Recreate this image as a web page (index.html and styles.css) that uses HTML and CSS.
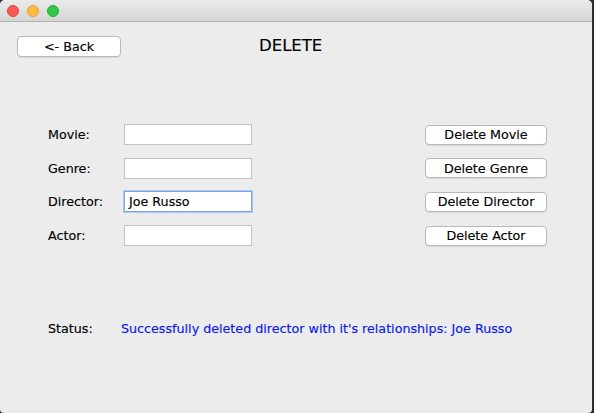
FILE: index.html
```html
<!DOCTYPE html>
<html>
<head>
<meta charset="utf-8">
<link rel="stylesheet" href="styles.css">
</head>
<body>
<div class="window">
  <div class="titlebar">
    <span class="light red"></span>
    <span class="light yellow"></span>
    <span class="light green"></span>
  </div>
  <div class="content">
    <div class="header">
      <button class="btn back">&lt;- Back</button>
      <div class="title">DELETE</div>
    </div>
    <div class="form">
      <div class="label">Movie:</div>
      <div class="field"></div>
      <button class="btn action">Delete Movie</button>

      <div class="label">Genre:</div>
      <div class="field"></div>
      <button class="btn action">Delete Genre</button>

      <div class="label">Director:</div>
      <div class="field focused">Joe Russo</div>
      <button class="btn action">Delete Director</button>

      <div class="label">Actor:</div>
      <div class="field"></div>
      <button class="btn action">Delete Actor</button>
    </div>
    <div class="status">
      <div class="status-label">Status:</div>
      <div class="status-text">Successfully deleted director with it's relationships: Joe Russo</div>
    </div>
  </div>
</div>
</body>
</html>
```

FILE: styles.css
```css
html, body {
  margin: 0;
  padding: 0;
  background: #2b2f33;
}
body {
  font-family: "DejaVu Sans", "Liberation Sans", sans-serif;
  font-size: 12.7px;
  color: #000;
  -webkit-text-stroke: 0.15px currentColor;
}
.window {
  width: 592px;
  height: 413px;
  background: #ececec;
  border-radius: 5px 5px 4px 4px;
  overflow: hidden;
}
.titlebar {
  height: 21px;
  border-bottom: 1px solid #b1b1b1;
  background: linear-gradient(#ebebeb, #d5d5d5);
  display: flex;
  align-items: center;
  padding-left: 7px;
  gap: 8px;
}
.light {
  width: 12px;
  height: 12px;
  border-radius: 50%;
  box-sizing: border-box;
}
.red { background: #fc5753; border: 1px solid #de4440; }
.yellow { background: #fdbc40; border: 1px solid #dea236; }
.green { background: #33c748; border: 1px solid #27aa35; }
.content {
  padding: 14px 0 0 17px;
}
.header {
  display: flex;
  align-items: flex-start;
}
.btn {
  font-family: "DejaVu Sans", "Liberation Sans", sans-serif;
  font-size: 12.7px;
  color: #000;
  background: #ffffff;
  border: 1px solid #b9b9b9;
  border-radius: 4px;
  box-shadow: 0 1px 0 rgba(0,0,0,0.08);
  padding: 0;
  margin: 0;
  box-sizing: border-box;
  -webkit-text-stroke: 0.15px currentColor;
}
.back {
  width: 104px;
  height: 21px;
}
.title {
  margin-left: 138px;
  margin-top: 1px;
  font-size: 16.5px;
  line-height: 18px;
  color: #000;
}
.form {
  display: grid;
  grid-template-columns: 76px 128px 122px;
  grid-template-rows: repeat(4, 21px);
  column-gap: 0;
  row-gap: 12.7px;
  margin-top: 67px;
  margin-left: 31px;
  align-items: center;
}
.form .action {
  margin-left: 173px;
  width: 122px;
  height: 20px;
}
.label {
  line-height: 21px;
}
.field {
  height: 21px;
  box-sizing: border-box;
  background: #fff;
  border: 1px solid #c4c4c4;
  line-height: 19px;
  padding-left: 4px;
  color: #000;
}
.field.focused {
  border: 1px solid #7aa7e8;
  box-shadow: 0 0 0 1px #a9c8f3;
}
.status {
  display: flex;
  margin-top: 74px;
  margin-left: 31px;
  line-height: 18px;
}
.status-label {
  width: 73px;
}
.status-text {
  color: #0a18f0;
}
```
